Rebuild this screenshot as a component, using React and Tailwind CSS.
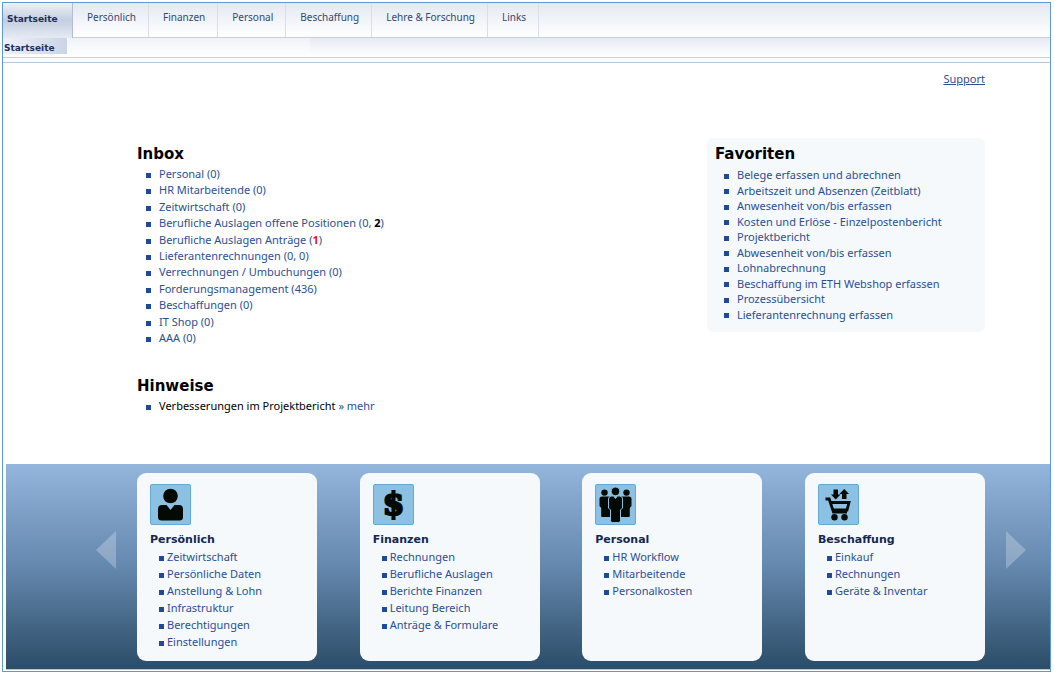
const linkClass = "text-[#2b4f94] hover:underline";

const tabs = ["Persönlich", "Finanzen", "Personal", "Beschaffung", "Lehre & Forschung", "Links"];

const inbox = [
  { text: "Personal (0)" },
  { text: "HR Mitarbeitende (0)" },
  { text: "Zeitwirtschaft (0)" },
  { text: "Berufliche Auslagen offene Positionen (0, ", count: "2", color: "text-black" },
  { text: "Berufliche Auslagen Anträge (", count: "1", color: "text-[#f01010]" },
  { text: "Lieferantenrechnungen (0, 0)" },
  { text: "Verrechnungen / Umbuchungen (0)" },
  { text: "Forderungsmanagement (436)" },
  { text: "Beschaffungen (0)" },
  { text: "IT Shop (0)" },
  { text: "AAA (0)" },
];

const favoriten = [
  "Belege erfassen und abrechnen",
  "Arbeitszeit und Absenzen (Zeitblatt)",
  "Anwesenheit von/bis erfassen",
  "Kosten und Erlöse - Einzelpostenbericht",
  "Projektbericht",
  "Abwesenheit von/bis erfassen",
  "Lohnabrechnung",
  "Beschaffung im ETH Webshop erfassen",
  "Prozessübersicht",
  "Lieferantenrechnung erfassen",
];

function PersonIcon() {
  return (
    <svg viewBox="1 1 39 39" className="size-full" fill="#030a03">
      <circle cx="20.5" cy="12" r="7.3" />
      <path d="M12 21h4.5L20.5 26l4-5H29q4 0 4 4v8q0 3.5-3.5 3.5h-18Q8 36.5 8 33v-8q0-4 4-4z" />
    </svg>
  );
}

function DollarIcon() {
  return (
    <svg viewBox="1 1 39 39" className="size-full" fill="#030a03">
      <text x="20.5" y="31" textAnchor="middle" fontSize="31" fontWeight="700" fontFamily="DejaVu Serif, serif" stroke="#030a03" strokeWidth="2.2">$</text>
    </svg>
  );
}

function PeopleIcon() {
  return (
    <svg viewBox="1 1 39 39" className="size-full" fill="#030a03">
      <circle cx="9.5" cy="8.6" r="3.2" />
      <circle cx="31.5" cy="8.6" r="3.2" />
      <path d="M7 12.5h8V33H7q-.8 0-.8-1v-8l-1.700-2v-7q0-2.500 2.500-2.500z" />
      <path d="M34 12.5h-8V33h8q.8 0 .8-1v-8l1.700-2v-7q0-2.500-2.500-2.500z" />
      <g stroke="#8cc1e3" strokeWidth="1">
        <circle cx="20.5" cy="7.4" r="4.3" />
        <path d="M16.500 12h2.200l1.800 2.500 1.800-2.500h2.200q3 0 3 3v9l-2 2v10.500q0 2-2 2h-6q-2 0-2-2V26l-2-2v-9q0-3 3-3z" />
      </g>
    </svg>
  );
}

function CartIcon() {
  return (
    <svg viewBox="1 1 39 39" className="size-full" fill="#030a03">
      <path d="M15.500 5.500h4.500v5h2.500L17.700 15.500 13 10.500h2.500z" />
      <path d="M24 15h4.500v-5H31L26.200 5 21.500 10H24z" />
      <path d="M7.500 15h3.700l4.300 13.200H29" fill="none" stroke="#030a03" strokeWidth="2.8" />
      <path d="M12 18.500h19l-2 7.500H14.500" fill="none" stroke="#030a03" strokeWidth="2.8" />
      <circle cx="16.5" cy="33.2" r="3.2" />
      <circle cx="26.5" cy="33.2" r="3.2" />
    </svg>
  );
}

const karten = [
  { titel: "Persönlich", Icon: PersonIcon, links: ["Zeitwirtschaft", "Persönliche Daten", "Anstellung & Lohn", "Infrastruktur", "Berechtigungen", "Einstellungen"] },
  { titel: "Finanzen", Icon: DollarIcon, links: ["Rechnungen", "Berufliche Auslagen", "Berichte Finanzen", "Leitung Bereich", "Anträge & Formulare"] },
  { titel: "Personal", Icon: PeopleIcon, links: ["HR Workflow", "Mitarbeitende", "Personalkosten"] },
  { titel: "Beschaffung", Icon: CartIcon, links: ["Einkauf", "Rechnungen", "Geräte & Inventar"] },
];

function Bullet() {
  return <span className="mt-[3px] size-[5px] shrink-0 bg-[#1f4b96]" />;
}

function ListItem({ children }) {
  return (
    <li className="flex items-center gap-2 whitespace-nowrap">
      <Bullet />
      <span>{children}</span>
    </li>
  );
}

function Titel({ children }) {
  return <h2 className="font-['DejaVu_Sans'] text-[15px] leading-5 font-bold">{children}</h2>;
}

function Karte({ titel, Icon, links }) {
  return (
    <section className="min-h-[188px] w-[180px] rounded-[9px] bg-[#f5f9fc] px-[13px] pt-[11px] pb-[9px]">
      <div className="size-[41px] rounded-[2px] border border-[#62abd6] bg-[#8cc1e3]">
        <Icon />
      </div>
      <h3 className="mt-[7px] font-['DejaVu_Sans'] text-[11px] leading-[16px] font-bold text-[#14284f]">{titel}</h3>
      <ul className="pl-[9px] leading-[17px]">
        {links.map((l) => (
          <li key={l} className="flex items-center gap-[3px] whitespace-nowrap">
            <Bullet />
            <a href="#" className={linkClass}>{l}</a>
          </li>
        ))}
      </ul>
    </section>
  );
}

function Pfeil({ label, points }) {
  return (
    <button type="button" aria-label={label} className="mt-[58px] h-[38px] w-5 shrink-0">
      <svg viewBox="0 0 20 38" className="size-full" fill="#ffffff" fillOpacity="0.25">
        <polygon points={points} />
      </svg>
    </button>
  );
}

export default function App() {
  return (
    <div className="flex min-h-screen bg-white py-[2px] pr-[3px] pl-[2px] font-['Noto_Sans'] text-[11px] text-black">
      <div className="flex flex-1 flex-col border border-[#5b9bd5]">
        <header>
          <nav className="flex h-[35px] border-b border-[#c5cfdb] bg-linear-to-b from-[#e3e9f2] to-white text-[10px]">
            <a href="#" className="-mb-px w-[70px] border-r border-[#b0bdd2] bg-linear-to-b from-[#eef1f7] via-[#c3cedf] to-[#e6eaf4] pl-1 font-['DejaVu_Sans'] text-[9px] leading-8 font-bold text-[#1c2f5c]">Startseite</a>
            {tabs.map((t) => (
              <a key={t} href="#" className="border-r border-[#d9deea] pr-3 pl-[14px] leading-[29px] whitespace-nowrap text-[#33496f]">{t}</a>
            ))}
          </nav>
          <nav className="flex h-5 border-b border-[#c5cfdb] bg-linear-to-b from-[#e6eaf4] to-white">
            <a href="#" className="h-4 w-[65px] border-r border-white bg-linear-to-r from-[#eef1f8] to-[#cbd4e6] pl-px font-['DejaVu_Sans'] text-[9px] leading-5 font-bold text-[#1c2f5c]">Startseite</a>
            <div className="w-[242px] bg-white/40" />
          </nav>
          <div className="h-[5px] border-b border-[#b5c8d8] bg-[#fafcfd]" />
        </header>

        <main className="flex-1 pr-[65px] pl-[134px]">
          <div className="pt-2 text-right leading-4">
            <a href="#" className="text-[#2b4f94] underline">Support</a>
          </div>
          <div className="mt-[51px] flex items-start justify-between">
            <div className="pt-[6px]">
              <section>
                <Titel>Inbox</Titel>
                <ul className="mt-[2px] flex h-[180px] flex-col justify-between pl-[9px] leading-4">
                  {inbox.map((e) => (
                    <ListItem key={e.text}>
                      <a href="#" className={linkClass}>
                        {e.text}
                        {e.count && (
                          <>
                            <b className={e.color}>{e.count}</b>)
                          </>
                        )}
                      </a>
                    </ListItem>
                  ))}
                </ul>
              </section>
              <section className="mt-[30px]">
                <Titel>Hinweise</Titel>
                <ul className="mt-[2px] pl-[9px] leading-4">
                  <ListItem>
                    Verbesserungen im Projektbericht <a href="#" className={linkClass}>» mehr</a>
                  </ListItem>
                </ul>
              </section>
            </div>
            <section className="w-[278px] rounded-[6px] bg-[#f5f9fc] px-2 pt-[6px] pb-[10px]">
              <Titel>Favoriten</Titel>
              <ul className="mt-[3px] flex h-[155px] flex-col justify-between pl-[9px] leading-[15px]">
                {favoriten.map((f) => (
                  <ListItem key={f}>
                    <a href="#" className={linkClass}>{f}</a>
                  </ListItem>
                ))}
              </ul>
            </section>
          </div>
        </main>

        <div className="mb-px ml-[3px] flex items-start gap-[21px] border-b border-[#b9c4ce] bg-linear-to-b from-[#94b5dc] via-[#6588ae] to-[#2c4d68] pt-[9px] pr-6 pb-2 pl-[90px]">
          <Pfeil label="Zurück" points="20,0 20,38 0,19" />
          <div className="flex flex-1 justify-between">
            {karten.map((k) => (
              <Karte key={k.titel} {...k} />
            ))}
          </div>
          <Pfeil label="Weiter" points="0,0 0,38 20,19" />
        </div>
      </div>
    </div>
  );
}
